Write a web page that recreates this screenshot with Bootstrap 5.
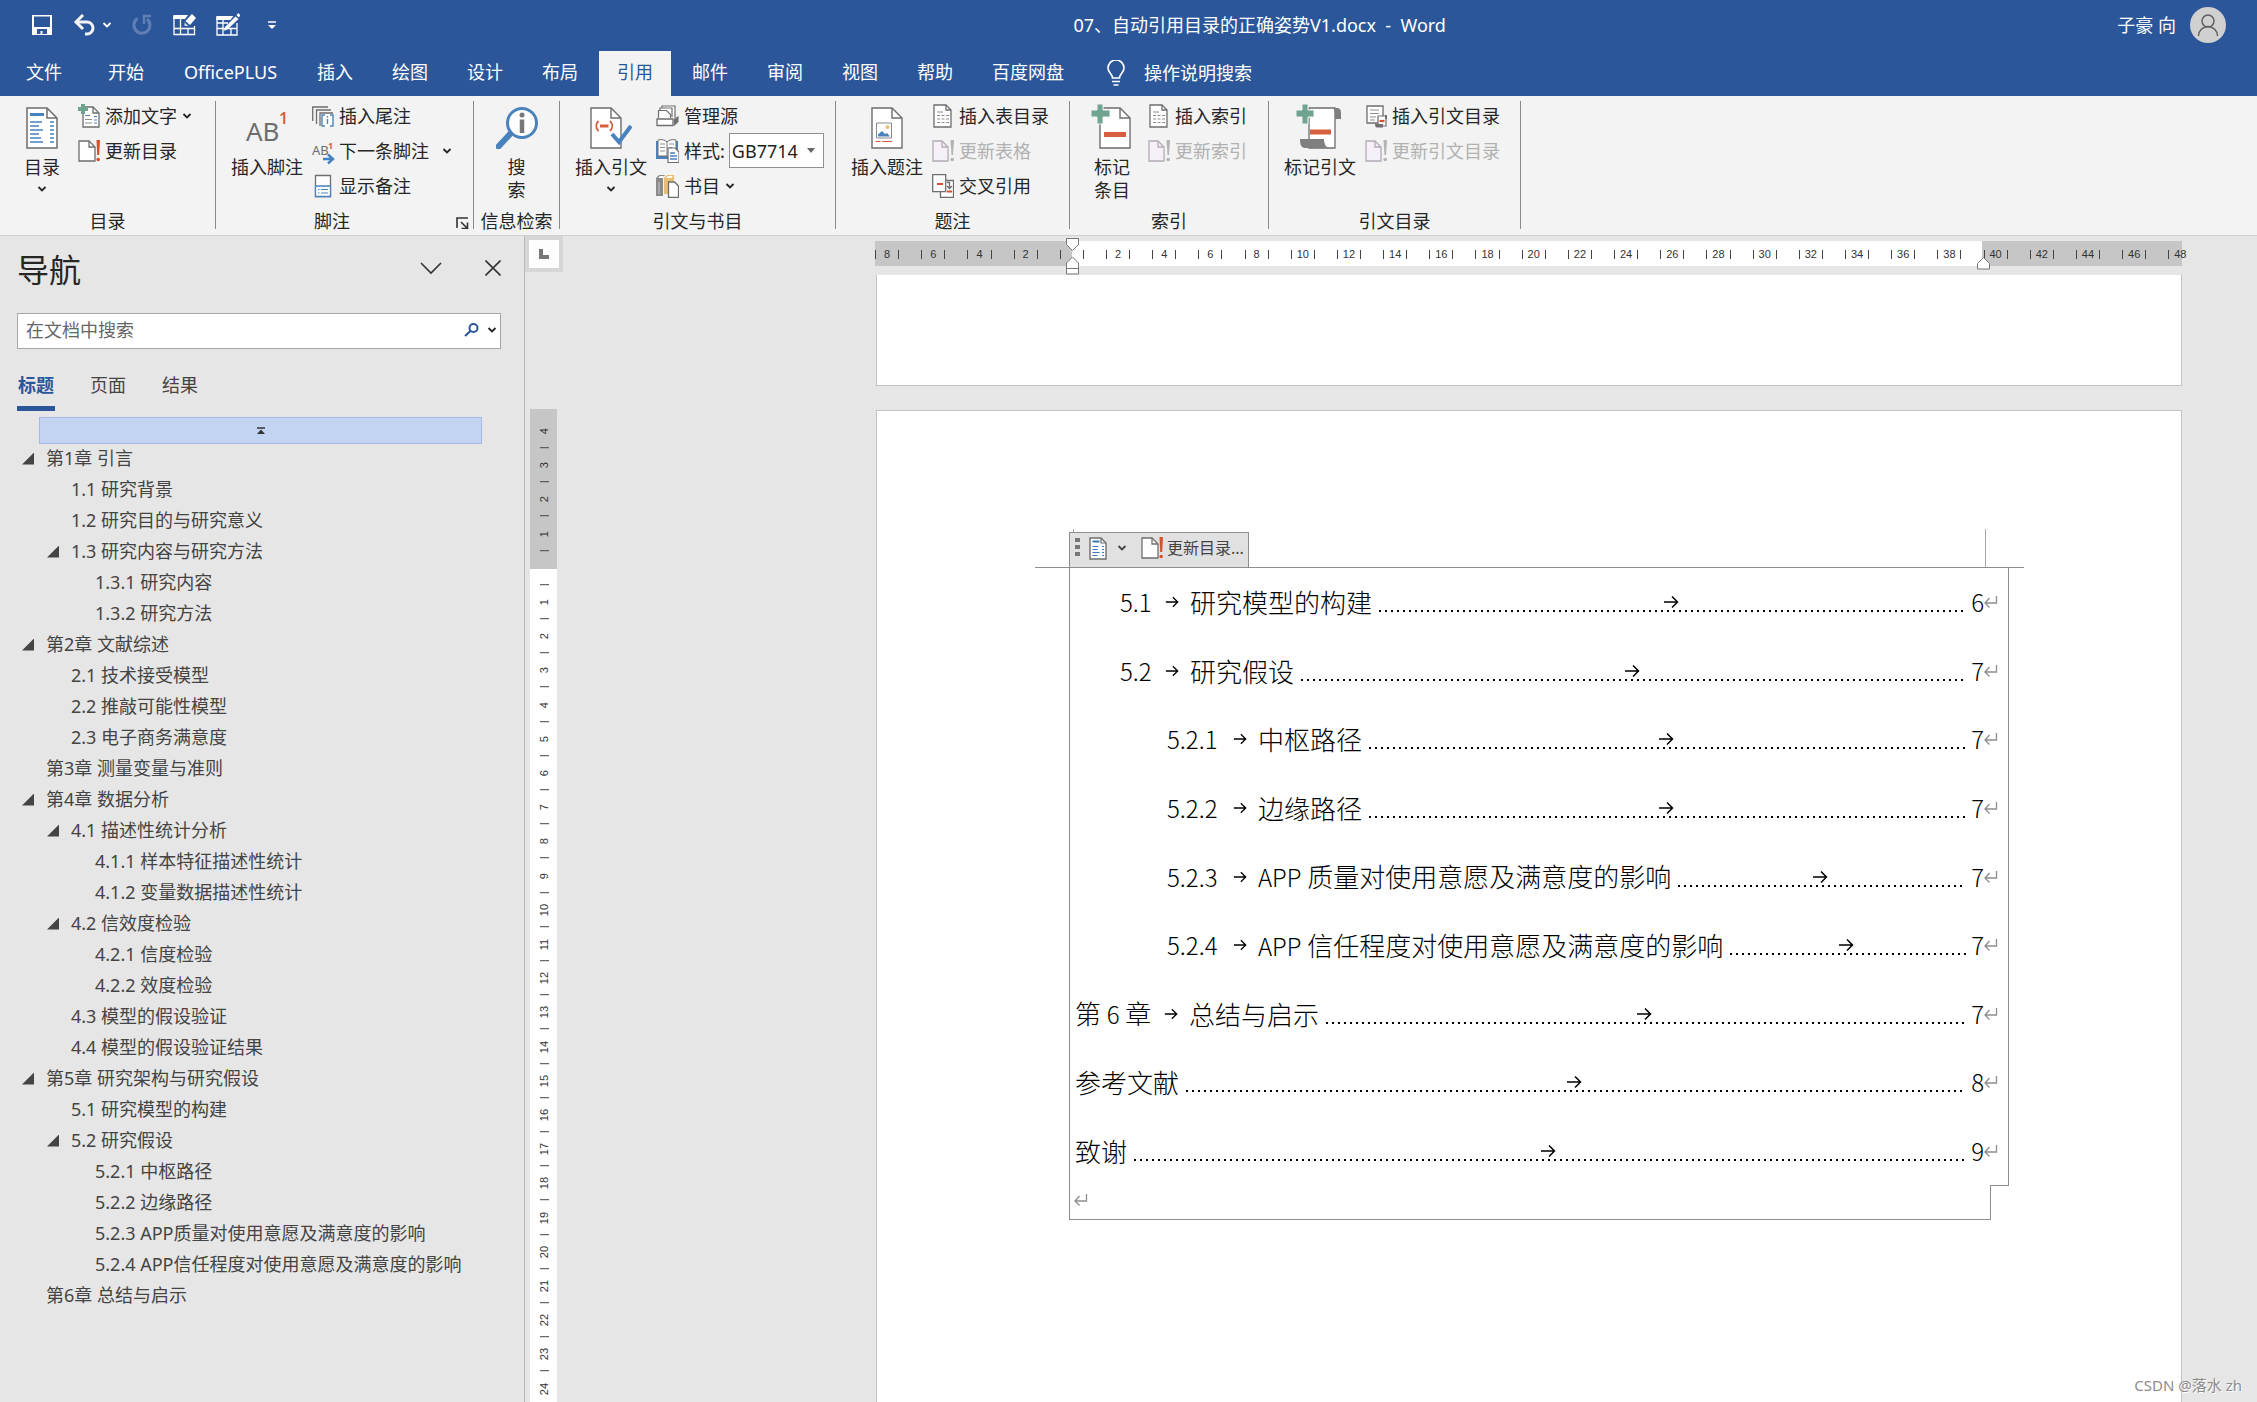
<!DOCTYPE html>
<html lang="zh-CN">
<head>
<meta charset="utf-8">
<meta name="viewport" content="width=device-width, initial-scale=1">
<title>07、自动引用目录的正确姿势V1.docx - Word</title>
<link href="https://cdn.jsdelivr.net/npm/bootstrap@5.3.0/dist/css/bootstrap.min.css" rel="stylesheet">
<style>
:root{--word:#2b579a;--ink:#262626;--soft:#444;--edge:#7a7a7a;--accent:#4a82bd;--warn:#d65f3f;--plus:#6fa491}
body{font:18px/24px "Noto Sans","Noto Sans CJK SC",sans-serif;color:var(--ink);background:#e6e6e6;min-height:100vh;overflow:hidden}
button{font:inherit;color:inherit;background:none;border:0;padding:0;text-align:left}
svg{display:block;flex:none}
.app-head{background:var(--word);color:#fff}
.title-row{height:51px;padding:0 31px 2px 32px}
.quick{gap:20px}
.quick-undo{gap:6px}
.doc-name{padding-left:118px;white-space:pre}
.account{gap:14px}
.tab-strip{height:45px;padding-left:8px;gap:3px}
.tab-strip .nav-link{color:#fff;padding:0 18px;height:45px;line-height:42px;border-radius:0;white-space:nowrap}
.tab-strip .nav-link.active{background:#f3f3f3;color:var(--word)}
.tab-file{margin-right:7px}
.tab-strip .tab-plus{width:131px;text-align:center}
.tell-me{gap:19px;margin-left:22px;padding-bottom:2px}
.ribbon{background:#f3f3f3;border-bottom:1px solid #d0d0d0;padding:5px 0 6px;height:140px}
.rb-group{border-right:1px solid #8a8a8a;height:128px;width:216px}
.rb-body{height:112px;padding-left:6px}
.rb-label{line-height:16px}
.big-btn{width:90px;padding-top:6px;white-space:nowrap}
.big-btn.slim{width:72px}
.big-btn svg:first-child{margin-bottom:7px}
.big-btn span{line-height:23px}
.big-btn span+svg{margin-top:6px}
.small-col{margin-top:-3px}
.small-btn{height:35px;gap:5px;white-space:nowrap}
.small-btn:disabled{color:#b1b1b1}
.g-foot{width:258px}.g-look{width:86px}.g-cite{width:276px}.g-cap{width:234px}.g-index{width:199px}.g-auth{width:252px}
.g-look .rb-label{margin-top:11px}
.style-pick{width:95px;height:35px;border:1px solid #8f8f8f;background:#fff;appearance:none;padding:0 2px;font:inherit;color:#1e1e1e;border-radius:0}
.style-wrap{position:relative;margin-left:-1px}
.style-wrap svg{position:absolute;right:9px;top:15px;pointer-events:none}
.work{height:calc(100vh - 236px)}
.nav-pane{width:525px;border-right:1px solid #b9b9b9;padding:0 23px 0 17px;flex:none}
.pane-head{height:70px;padding-bottom:2px}
.pane-title{font-size:32px;line-height:40px;font-weight:400;margin:0}
.pane-tools{gap:43px;padding-bottom:4px}
.find-box{border:1px solid #a6a6a6;background:#fff;height:36px;margin-top:7px;padding:0 3px 2px 8px}
.find-box input{font:inherit;border:0;outline:0;background:none;padding:0;color:var(--ink);line-height:30px}
.find-box input::placeholder{color:#666;opacity:1}
.pane-tabs{gap:34px;margin-top:13px}
.pane-tabs .nav-link{color:var(--soft);padding:2px 1px 0;line-height:42px;border-bottom:5px solid transparent;border-radius:0}
.pane-tabs .nav-link.active{color:var(--word);font-weight:700;border-color:var(--word)}
.top-jump{height:27px;margin:6px 19px 0 22px;background:#c3d4f2;border:1px solid #a3bce6}
.outline{margin:-1px 0 0;padding:0;list-style:none;color:var(--soft)}
.outline li{height:31px;line-height:31px;padding-left:29px;display:flex;align-items:center;white-space:nowrap}
.outline .lv2{padding-left:54px}
.outline .lv3{padding-left:78px}
.outline li button{width:12px;height:12px;background:var(--soft);clip-path:polygon(100% 0,100% 100%,0 100%);margin:0 12px 0 -24px}
.side-rule{width:38px;flex:none}
.tab-kind{width:38px;height:36px;border:4px solid #d6d6d6;background:#fdfdfd}
.v-rule{width:27px;margin:137px 0 0 5px;padding-top:5px;background:linear-gradient(#c6c6c6 160px,#fff 160px)}
.v-rule .ticks{height:calc(100% + 4px)}
.v-rule i,.h-rule i{font:11px/12px "Liberation Sans",sans-serif;color:#333;flex:1 1 0}
.v-rule i{writing-mode:vertical-rl;transform:rotate(180deg);display:flex;align-items:center;justify-content:center;width:27px;position:relative}
.v-rule i::before{content:"";position:absolute;top:0;left:8px;width:9px;height:1px;background:#444}
.canvas{padding:0 75px 0 313px;min-width:0}
.h-rule{height:25px;margin:5px 0 0 -1px;position:relative;background:linear-gradient(to right,#c6c6c6 197px,#fff 197px,#fff calc(100% - 200px),#c6c6c6 calc(100% - 200px))}
.h-rule .ticks{margin:0 -20px 0 -11px;height:25px;padding-top:2px}
.h-rule i{text-align:center;height:9px;line-height:9px;white-space:nowrap}
.h-rule i.lab{border-left:1px solid #444;border-right:1px solid #444}
.h-rule i.half{flex-grow:.5}
.h-rule i.endmost{border-right:0}
.mk-left{position:absolute;left:191px;top:-3px}
.mk-right{position:absolute;right:192px;top:16px}
.paper{background:#fff;border:1px solid #c3c3c3}
.paper-prev{height:111px;margin-top:9px;border-top:0}
.paper-now{margin-top:24px;border-bottom:0;padding:118px 157px 0 158px}
.crop-row{height:38px;padding:0 38px 0 34px}
.crop-right{border-right:1px solid #a8a8a8}
.toc-bar{height:35px;margin-top:3px;background:#e1e1e1;border:1px solid #8e8e8e;border-bottom:0;width:180px;padding:0 0 4px 5px;position:relative;font-size:16px;color:var(--soft)}
.toc-bar::before{content:"";position:absolute;left:3px;top:-4px;width:1px;height:3px;background:#a8a8a8}
.bar-pick{gap:10px;margin:0 14px 0 8px}
.bar-update{gap:4px}
.toc-rule{height:1px;background:#8e8e8e}
.toc-frame{margin:0 15px 0 34px}
.toc-list{height:618px;border:1px solid #8e8e8e;border-top:0;color:#000;font:26px/40px "Noto Sans CJK SC",sans-serif;font-weight:300}
.toc-list a{color:inherit;text-decoration:none;padding:0 10px 0 5px;white-space:nowrap;flex:1 1 0}
.toc-list .t2{padding-left:50px}
.toc-list .t3{padding-left:97px}
.toc-num{width:89px}
.t2 .toc-num{width:45px}
.t3 .toc-num{width:66px}
.toc-list b{font-size:24px;font-weight:300}
.toc-num+svg{margin-right:11px}
.leader{height:20px;margin:0 5px 0 3px;background:repeating-linear-gradient(to right,transparent 0 4px,#000 4px 6px) bottom/100% 2px no-repeat}
.toc-end{width:calc(100% - 18px);height:35px;margin-top:-1px;background:#fff;border:1px solid #8e8e8e;border-top:0;position:relative;padding:8px 0 0 4px}
.stamp{position:absolute;right:15px;bottom:5px;font-size:15px;color:#8d8d8d;text-shadow:1px 1px 0 #fff}
</style>
</head>
<body class="d-flex flex-column">
<svg width="0" height="0" class="position-absolute" aria-hidden="true">
<defs>
<symbol id="chev" viewBox="0 0 10 8"><path d="M1.500 2L5 5.500 8.500 2" fill="none" stroke="currentColor" stroke-width="1.800"/></symbol>
<symbol id="docbang" viewBox="0 0 22 24"><path d="M1 2h10l6 6v14H1z" fill="#fff" stroke="#6e6e6e" stroke-width="1.300"/><path d="M11 2v6h6" fill="none" stroke="#6e6e6e" stroke-width="1.300"/><path d="M18.500 1h3.500l-.8 15h-2z" fill="#d6502f"/><circle cx="20.200" cy="20.500" r="1.800" fill="#d6502f"/></symbol>
<symbol id="docbang-off" viewBox="0 0 22 24"><path d="M1 2h9l6 6v14H1z" fill="#f6f0f8" stroke="#b3aab5" stroke-width="1.300"/><path d="M10 2v6h6" fill="none" stroke="#b3aab5" stroke-width="1.300"/><path d="M18.500 1h3.500l-1 15h-1.500z" fill="#b3b3b3"/><circle cx="20.200" cy="20.500" r="1.800" fill="#b3b3b3"/></symbol>
<symbol id="doctable" viewBox="0 0 22 24"><path d="M2 1h12l5 5v17H2z" fill="#fff" stroke="#6e6e6e" stroke-width="1.300"/><path d="M14 1v5h5" fill="none" stroke="#6e6e6e" stroke-width="1.300"/><path d="M5 8h6M5 11.500h3M9.500 11.500h3M14 11.500h3M5 15h3M9.500 15h3M14 15h3M5 18.500h3M9.500 18.500h3M14 18.500h3" stroke="#8d8d8d" stroke-width="1.200"/></symbol>
<symbol id="bluedoc" viewBox="0 0 32 42"><path d="M1 1h20l10 10v30H1z" fill="#fff" stroke="#6e6e6e" stroke-width="1.500"/><path d="M21 1v10h10" fill="none" stroke="#6e6e6e" stroke-width="1.500"/><path d="M4 7.500h14" stroke="#4a82bd" stroke-width="3"/><path d="M4 15h12M4 19h9M4 23h13M4 27h9M4 31h11M4 35h13M24 15h4M24 19h4M24 23h4M24 27h4M24 31h4M24 35h4" stroke="#4a82bd" stroke-width="1.400"/></symbol>
<symbol id="bluedoc-s" viewBox="0 0 18 23"><path d="M1 1h11l5 5v16H1z" fill="#fff" stroke="#6e6e6e" stroke-width="1.400"/><path d="M12 1v5h5" fill="none" stroke="#6e6e6e" stroke-width="1.200"/><path d="M3.500 4.500h7" stroke="#3c78b8" stroke-width="2"/><path d="M3.500 9.500h6M3.500 12.500h5M3.500 15.500h7M3.500 18.500h5M13 9.500h2M13 12.500h2M13 15.500h2M13 18.500h2" stroke="#3c78b8" stroke-width="1.200"/></symbol>
<symbol id="tabarrow" viewBox="0 0 16 14"><path d="M1 7h14M9 1.500L14.500 7 9 12.500" fill="none" stroke="#000" stroke-width="1.500"/></symbol>
<symbol id="ret" viewBox="0 0 14 14"><path d="M12.500 1v7H1M5.500 3L1 8l4.500 4.500" fill="none" stroke="#8d8d8d" stroke-width="1.300"/></symbol>
</defs>
</svg>

<header class="app-head">
  <div class="title-row d-flex align-items-center">
    <div class="quick d-flex align-items-center">
      <button aria-label="保存"><svg width="20" height="20" viewBox="0 0 20 20"><path fill="#fff" fill-rule="evenodd" d="M0 0h20v20H0zM2 1.500V12h16V1.500zM5 14v5h3.500v-3h2v3H15v-5z"/></svg></button>
      <div class="quick-undo d-flex align-items-center">
        <button aria-label="撤消"><svg width="24" height="22" viewBox="0 0 24 22"><path d="M5 8h10a6 6 0 0 1 0 12h-2" fill="none" stroke="#f3f3f3" stroke-width="3"/><path d="M11 1L4 8l7 7" fill="none" stroke="#f3f3f3" stroke-width="3"/></svg></button>
        <button aria-label="撤消列表"><svg width="10" height="8"><use href="#chev"/></svg></button>
      </div>
      <button aria-label="重复"><svg width="20" height="22" viewBox="0 0 20 22"><path d="M5.500 4.500A8 8 0 1 0 15 5" fill="none" stroke="#6080b5" stroke-width="3"/><path d="M19 2h-7v8" fill="none" stroke="#6080b5" stroke-width="2.400"/></svg></button>
      <button aria-label="擦除表格"><svg width="24" height="22" viewBox="0 0 24 22"><path d="M2 2v18.500h20.500V12M2 14.500h20.500M8.500 4v16.500M16 14v6.500" fill="none" stroke="#fff" stroke-width="1.300"/><path d="M1.400 1H16l-3 4H1.400z" fill="#fff"/><path d="M20 0l4 4-6 7-4.500-4z" fill="#fff"/><path d="M12.500 8.500l4 3.500h-4z" fill="#cfd9ea"/></svg></button>
      <button aria-label="绘制表格"><svg width="24" height="24" viewBox="0 0 24 24"><path d="M1 4v18h20V10M1 10h11M1 15.500h20M7 5v17M15 16v6" fill="none" stroke="#fff" stroke-width="1.300"/><path d="M.4 3h17l-3 4H.4z" fill="#fff"/><path d="M19.500 3.500l3 2.500L12 16l-4 2 1.500-4.500z" fill="#fff"/><path d="M20.500 2l2-2 2 2.500-2 2z" fill="#fff"/></svg></button>
      <button aria-label="自定义快速访问工具栏"><svg width="24" height="8" viewBox="0 0 24 8"><path d="M8 1h8" stroke="#fff" stroke-width="1.500"/><path d="M8 4h8l-4 4z" fill="#fff"/></svg></button>
    </div>
    <div class="doc-name flex-fill text-center">07、自动引用目录的正确姿势V1.docx  -  Word</div>
    <button class="account d-flex align-items-center">子豪 向
      <svg width="36" height="36" viewBox="0 0 36 36"><circle cx="18" cy="18" r="18" fill="#d0d0d0"/><circle cx="18" cy="14" r="6" fill="none" stroke="#5e5e5e" stroke-width="1.500"/><path d="M8.500 29a9.500 9.500 0 0 1 19 0" fill="none" stroke="#5e5e5e" stroke-width="1.500"/></svg>
    </button>
  </div>
  <nav class="tab-strip nav flex-nowrap">
    <a class="nav-link tab-file" href="#">文件</a>
    <a class="nav-link" href="#">开始</a>
    <a class="nav-link tab-plus" href="#">OfficePLUS</a>
    <a class="nav-link" href="#">插入</a>
    <a class="nav-link" href="#">绘图</a>
    <a class="nav-link" href="#">设计</a>
    <a class="nav-link" href="#">布局</a>
    <a class="nav-link active" href="#" aria-current="page">引用</a>
    <a class="nav-link" href="#">邮件</a>
    <a class="nav-link" href="#">审阅</a>
    <a class="nav-link" href="#">视图</a>
    <a class="nav-link" href="#">帮助</a>
    <a class="nav-link" href="#">百度网盘</a>
    <button class="tell-me d-flex align-items-center"><svg width="18" height="26" viewBox="0 0 18 26"><path d="M5.500 18c0-4-4.500-5-4.500-10a8 8 0 0 1 16 0c0 5-4.500 6-4.500 10z" fill="none" stroke="#fff" stroke-width="1.600"/><path d="M5 21.500h8M6.500 25h5" stroke="#fff" stroke-width="1.600"/></svg>操作说明搜索</button>
  </nav>
</header>

<section class="ribbon d-flex" aria-label="引用">
  <div class="rb-group">
    <div class="rb-body d-flex">
      <button class="big-btn slim d-flex flex-column align-items-center"><svg width="32" height="42"><use href="#bluedoc"/></svg><span>目录</span><svg width="10" height="8"><use href="#chev"/></svg></button>
      <div class="small-col">
        <button class="small-btn d-flex align-items-center"><svg width="22" height="24" viewBox="0 0 22 24"><path d="M5 3h10l6 6v14H5z" fill="#fff" stroke="#6e6e6e" stroke-width="1.300"/><path d="M15 3v6h6" fill="none" stroke="#6e6e6e" stroke-width="1.300"/><path d="M7 15.500h7M7 19h7" stroke="#8d8d8d" stroke-width="1.200"/><path d="M7 11.500h5M16 12.500h3M16 16h3M16 19h3" stroke="#4a82bd" stroke-width="1.200"/><path d="M3 0h4v3h3v4H7v3H3V7H0V3h3z" fill="#6fa491"/></svg>添加文字<svg width="10" height="8"><use href="#chev"/></svg></button>
        <button class="small-btn d-flex align-items-center"><svg width="22" height="24"><use href="#docbang"/></svg>更新目录</button>
      </div>
    </div>
    <div class="rb-label text-center">目录</div>
  </div>

  <div class="rb-group g-foot">
    <div class="rb-body d-flex">
      <button class="big-btn d-flex flex-column align-items-center"><svg width="44" height="42" viewBox="0 0 44 42"><text x="1" y="34" font-size="26" fill="#6e6e6e">AB</text><text x="34" y="17" font-size="16" font-weight="600" fill="#d65f3f">1</text></svg><span>插入脚注</span></button>
      <div class="small-col">
        <button class="small-btn d-flex align-items-center"><svg width="22" height="24" viewBox="0 0 22 24"><path d="M.7 17V3H16M4.500 20V6H19M8 22V9h13" fill="none" stroke="#6e6e6e" stroke-width="1.300"/><path d="M9 10h13v13H9z" fill="#fff"/><path d="M13 11h-3v11h3M18 11h3v11h-3M15.500 15v5M15.500 12v1.500" fill="none" stroke="#4a82bd" stroke-width="1.400"/></svg>插入尾注</button>
        <button class="small-btn d-flex align-items-center"><svg class="overflow-visible" width="22" height="28" viewBox="0 0 22 28"><text x="0" y="18" font-size="13" fill="#6e6e6e">AB</text><text x="16" y="12" font-size="9" font-weight="700" fill="#d65f3f">1</text><path d="M11 22h9M16 17.500l5 4.500-5 4.500" fill="none" stroke="#4a82bd" stroke-width="2.400"/></svg>下一条脚注<svg class="ms-2" width="10" height="8"><use href="#chev"/></svg></button>
        <button class="small-btn d-flex align-items-center"><svg width="22" height="24" viewBox="0 0 22 24"><path d="M3.500 1.500h15v21h-15z" fill="#fff" stroke="#6e6e6e" stroke-width="1.300"/><path d="M3.500 12h15v10.500h-15z" fill="#fff" stroke="#4a82bd" stroke-width="1.300"/><path d="M6 15.500h1.500M9 15.500h7M6 19h1.500M9 19h7" stroke="#4a82bd" stroke-width="1.200"/></svg>显示备注</button>
      </div>
    </div>
    <div class="rb-label d-flex"><span class="flex-fill text-center pe-2">脚注</span><button aria-label="脚注和尾注"><svg class="mt-1 me-1" width="13" height="12" viewBox="0 0 13 12"><path d="M1 11V1h11M5 5l6 6M11.500 5.500v6h-6" fill="none" stroke="#333" stroke-width="1.600"/></svg></button></div>
  </div>

  <div class="rb-group g-look">
    <button class="big-btn slim mx-auto d-flex flex-column align-items-center h-auto"><svg width="42" height="42" viewBox="0 0 42 42"><path d="M2.500 39.500L15 26" stroke="#4a82bd" stroke-width="6" stroke-linecap="round"/><circle cx="26" cy="16" r="14.500" fill="#fff" stroke="#4a82bd" stroke-width="3"/><circle cx="26" cy="8" r="2.500" fill="#777"/><path d="M26 12.500V26" stroke="#777" stroke-width="4.500"/></svg><span>搜</span><span>索</span></button>
    <div class="rb-label text-center">信息检索</div>
  </div>

  <div class="rb-group g-cite">
    <div class="rb-body d-flex">
      <button class="big-btn d-flex flex-column align-items-center"><svg width="42" height="42" viewBox="0 0 42 42"><path d="M1 1h20l10 10v30H1z" fill="#fff" stroke="#6e6e6e" stroke-width="1.400"/><path d="M21 1v10h10" fill="none" stroke="#6e6e6e" stroke-width="1.400"/><path d="M8.500 14c-3 3-3 7 0 10M20 14c3 3 3 7 0 10" fill="none" stroke="#d65f3f" stroke-width="1.800"/><path d="M10 19h8.500" stroke="#d65f3f" stroke-width="3"/><path d="M22 27l7 8 12-16" fill="none" stroke="#4a82bd" stroke-width="4"/></svg><span>插入引文</span><svg width="10" height="8"><use href="#chev"/></svg></button>
      <div class="small-col">
        <button class="small-btn d-flex align-items-center"><svg width="23" height="22" viewBox="0 0 23 22"><path d="M6 3V1h13v12M4 5V3h12v9" fill="#fff" stroke="#6e6e6e" stroke-width="1.200"/><path d="M2.500 13V5.500h8l4 4V13" fill="#fff" stroke="#6e6e6e" stroke-width="1.200"/><path d="M1 14h16v6.500H1z" fill="#fff" stroke="#6e6e6e" stroke-width="1.300"/><path d="M18 14l4.500-3v6L18 21z" fill="#6e6e6e"/></svg>管理源</button>
        <div class="small-btn d-flex align-items-center"><svg width="23" height="24" viewBox="0 0 23 24"><path d="M0 2h22v18H0z" fill="#4a82bd"/><path d="M2 1c4-1 7 0 9 2 2-2 5-3 9-2v16H2z" fill="#fff" stroke="#6e6e6e"/><path d="M11 3v14M4 5h5M4 8.500h5M4 12h5M13 5h5M13 8.500h3" stroke="#8d8d8d" stroke-width="1.200"/><path d="M12 9h7l4 4v10.500H12z" fill="#fff" stroke="#6e6e6e" stroke-width="1.200"/><path d="M14 14h5M14 17h7M14 20h7" stroke="#4a82bd" stroke-width="1.300"/></svg><label for="citeStyle">样式:</label>
          <div class="style-wrap"><select id="citeStyle" class="style-pick"><option>GB7714</option></select><svg width="8" height="5" viewBox="0 0 8 5"><path d="M0 0h8L4 5z" fill="#666"/></svg></div></div>
        <button class="small-btn d-flex align-items-center"><svg width="23" height="24" viewBox="0 0 23 24"><path d="M0 4l3-3h6L7 4v18H0z" fill="#8a8a8a"/><path d="M2 4l2-2h4L7 4z" fill="#fff"/><path d="M8 4l3-3h7v5l-3 14H8z" fill="#e9bd74"/><path d="M10 4l2-2h5l-2 2z" fill="#fff"/><path d="M3 8v12" stroke="#c8c8c8"/><path d="M12.500 8h6l4 4v11.300h-10z" fill="#fff" stroke="#6e6e6e" stroke-width="1.300"/></svg>书目<svg width="10" height="8"><use href="#chev"/></svg></button>
      </div>
    </div>
    <div class="rb-label text-center">引文与书目</div>
  </div>

  <div class="rb-group g-cap">
    <div class="rb-body d-flex">
      <button class="big-btn d-flex flex-column align-items-center"><svg width="32" height="42" viewBox="0 0 32 42"><path d="M1 1h20l10 10v30H1z" fill="#fff" stroke="#6e6e6e" stroke-width="1.400"/><path d="M21 1v10h10" fill="none" stroke="#6e6e6e" stroke-width="1.400"/><path d="M5.500 16h15v15h-15z" fill="#fff" stroke="#8a8a8a"/><circle cx="16.500" cy="20" r="2" fill="#ecc078"/><path d="M7 29.500v-2l4-3.500 3 3 2-1 3 3.500z" fill="#4a82bd"/><path d="M4.500 34.500h5M11 34.500h10" stroke="#d65f3f" stroke-width="1.200"/></svg><span>插入题注</span></button>
      <div class="small-col">
        <button class="small-btn d-flex align-items-center"><svg width="22" height="24"><use href="#doctable"/></svg>插入表目录</button>
        <button class="small-btn d-flex align-items-center" disabled><svg width="22" height="24"><use href="#docbang-off"/></svg>更新表格</button>
        <button class="small-btn d-flex align-items-center"><svg width="22" height="24" viewBox="0 0 22 24"><path d="M8.500 6.500h13v17h-13z" fill="#fff" stroke="#6e6e6e" stroke-width="1.300"/><path d="M.7.700h13v17H.7z" fill="#fff" stroke="#6e6e6e" stroke-width="1.300"/><path d="M5 10h6M15 17.500h5" stroke="#d6502f" stroke-width="2.200"/><path d="M15 8.500h2.500V14M15 12l2.500 2.500L20 12" fill="none" stroke="#6e6e6e" stroke-width="1.300"/></svg>交叉引用</button>
      </div>
    </div>
    <div class="rb-label text-center">题注</div>
  </div>

  <div class="rb-group g-index">
    <div class="rb-body d-flex">
      <button class="big-btn slim d-flex flex-column align-items-center"><svg class="overflow-visible" width="42" height="42" viewBox="0 0 42 42"><path d="M9 1h20l10 10v30H9z" fill="#fff" stroke="#6e6e6e" stroke-width="1.400"/><path d="M29 1v10h10" fill="none" stroke="#6e6e6e" stroke-width="1.400"/><path d="M6-3h6v6h7v7h-7v7H6v-7H0V3h6z" fill="#6fa491" stroke="#f3f3f3"/><path d="M13 27.500h22" stroke="#d65f3f" stroke-width="5"/></svg><span>标记</span><span>条目</span></button>
      <div class="small-col">
        <button class="small-btn d-flex align-items-center"><svg width="22" height="24"><use href="#doctable"/></svg>插入索引</button>
        <button class="small-btn d-flex align-items-center" disabled><svg width="22" height="24"><use href="#docbang-off"/></svg>更新索引</button>
      </div>
    </div>
    <div class="rb-label text-center">索引</div>
  </div>

  <div class="rb-group g-auth">
    <div class="rb-body d-flex">
      <button class="big-btn d-flex flex-column align-items-center"><svg class="overflow-visible" width="48" height="42" viewBox="1 0 48 42"><path d="M14 1h26v40H14z" fill="#fff" stroke="#6e6e6e" stroke-width="1.300"/><path d="M36 1h6c3 0 4 2 4 5v6h-6V6c0-3-1-5-4-5z" fill="#7f7f7f"/><path d="M5 32h24c0 5 2 9 6 9H10c-4 0-5-4-5-9z" fill="#7f7f7f"/><path d="M7-3h6v6h6v7h-6v7H7v-7H1V3h6z" fill="#6fa491" stroke="#f3f3f3"/><path d="M15 25h21" stroke="#d65f3f" stroke-width="5"/></svg><span>标记引文</span></button>
      <div class="small-col">
        <button class="small-btn d-flex align-items-center"><svg width="22" height="24" viewBox="0 0 22 24"><path d="M2 2h16v17H2z" fill="#fff" stroke="#6e6e6e" stroke-width="1.300"/><path d="M5 6h9M5 9.500h9M5 13h6M5 16h5" stroke="#8d8d8d" stroke-width="1.200"/><path d="M13 12h8v10h-8z" fill="#fff" stroke="#6e6e6e" stroke-width="1.200"/><path d="M10 20h8v3.500h-6c-1.500 0-2-1.500-2-3.500zM20 11h1.500c1 0 1 2 1 4H20z" fill="#6e6e6e"/><path d="M14.500 17h5" stroke="#d6502f" stroke-width="2.200"/></svg>插入引文目录</button>
        <button class="small-btn d-flex align-items-center" disabled><svg width="22" height="24"><use href="#docbang-off"/></svg>更新引文目录</button>
      </div>
    </div>
    <div class="rb-label text-center">引文目录</div>
  </div>
</section>

<div class="work d-flex">
  <aside class="nav-pane">
    <div class="pane-head d-flex align-items-center justify-content-between">
      <h1 class="pane-title">导航</h1>
      <div class="pane-tools d-flex align-items-center">
        <button aria-label="任务窗格选项"><svg width="22" height="14" viewBox="0 0 22 14"><path d="M1 2l10 10L21 2" fill="none" stroke="#333" stroke-width="1.600"/></svg></button>
        <button aria-label="关闭"><svg width="16" height="16" viewBox="0 0 16 16"><path d="M.5.500l15 15M15.500.500l-15 15" stroke="#333" stroke-width="1.600"/></svg></button>
      </div>
    </div>
    <div class="find-box d-flex align-items-center">
      <input class="flex-fill" type="search" placeholder="在文档中搜索" aria-label="在文档中搜索">
      <button aria-label="搜索"><svg width="15" height="14" viewBox="0 0 15 14"><circle cx="9.500" cy="5" r="4" fill="none" stroke="#2b579a" stroke-width="2"/><path d="M6.500 8L1 13" stroke="#2b579a" stroke-width="2.200"/></svg></button>
      <button class="ms-2" aria-label="搜索选项"><svg width="10" height="8"><use href="#chev"/></svg></button>
    </div>
    <nav class="pane-tabs nav">
      <a class="nav-link active" href="#">标题</a>
      <a class="nav-link" href="#">页面</a>
      <a class="nav-link" href="#">结果</a>
    </nav>
    <div class="top-jump d-flex align-items-center justify-content-center"><svg width="8" height="8" viewBox="0 0 8 8"><path d="M0 1h8" stroke="#333" stroke-width="1.500"/><path d="M4 2.500L8 7H0z" fill="#333"/></svg></div>
    <ul class="outline">
      <li><button aria-label="折叠"></button>第1章 引言</li>
      <li class="lv2">1.1 研究背景</li>
      <li class="lv2">1.2 研究目的与研究意义</li>
      <li class="lv2"><button aria-label="折叠"></button>1.3 研究内容与研究方法</li>
      <li class="lv3">1.3.1 研究内容</li>
      <li class="lv3">1.3.2 研究方法</li>
      <li><button aria-label="折叠"></button>第2章 文献综述</li>
      <li class="lv2">2.1 技术接受模型</li>
      <li class="lv2">2.2 推敲可能性模型</li>
      <li class="lv2">2.3 电子商务满意度</li>
      <li>第3章 测量变量与准则</li>
      <li><button aria-label="折叠"></button>第4章 数据分析</li>
      <li class="lv2"><button aria-label="折叠"></button>4.1 描述性统计分析</li>
      <li class="lv3">4.1.1 样本特征描述性统计</li>
      <li class="lv3">4.1.2 变量数据描述性统计</li>
      <li class="lv2"><button aria-label="折叠"></button>4.2 信效度检验</li>
      <li class="lv3">4.2.1 信度检验</li>
      <li class="lv3">4.2.2 效度检验</li>
      <li class="lv2">4.3 模型的假设验证</li>
      <li class="lv2">4.4 模型的假设验证结果</li>
      <li><button aria-label="折叠"></button>第5章 研究架构与研究假设</li>
      <li class="lv2">5.1 研究模型的构建</li>
      <li class="lv2"><button aria-label="折叠"></button>5.2 研究假设</li>
      <li class="lv3">5.2.1 中枢路径</li>
      <li class="lv3">5.2.2 边缘路径</li>
      <li class="lv3">5.2.3 APP质量对使用意愿及满意度的影响</li>
      <li class="lv3">5.2.4 APP信任程度对使用意愿及满意度的影响</li>
      <li>第6章 总结与启示</li>
    </ul>
  </aside>

  <div class="side-rule d-flex flex-column">
    <button class="tab-kind d-flex align-items-center justify-content-center" aria-label="制表符"><svg width="10" height="10" viewBox="0 0 10 10"><path d="M2 0v8h8" fill="none" stroke="#777" stroke-width="4"/></svg></button>
    <div class="v-rule flex-fill"><div class="ticks d-flex flex-column" id="vTicks"></div></div>
  </div>

  <main class="canvas flex-fill d-flex flex-column">
    <div class="h-rule">
      <div class="ticks d-flex align-items-center" id="hTicks"></div>
      <svg class="mk-left" width="13" height="37" viewBox="0 0 13 37"><path d="M.5.500h12v6l-6 6-6-6zM.5 36V25l6-6 6 6v11zM.500 30.500h12" fill="#fff" stroke="#777"/></svg>
      <svg class="mk-right" width="13" height="13" viewBox="0 0 13 13"><path d="M.5 12V6.500l6-6 6 6V12z" fill="#fff" stroke="#777"/></svg>
    </div>
    <div class="paper paper-prev"></div>
    <article class="paper paper-now flex-fill">
      <div class="crop-row d-flex justify-content-between">
        <div class="toc-bar d-flex align-items-center">
          <svg width="6" height="20" viewBox="0 0 6 20"><path d="M0 0h5v4H0zM0 7h5v4H0zM0 14h5v4H0z" fill="#777"/></svg>
          <button class="bar-pick d-flex align-items-center" aria-label="目录"><svg width="18" height="23"><use href="#bluedoc-s"/></svg><svg width="10" height="8"><use href="#chev"/></svg></button>
          <button class="bar-update d-flex align-items-center"><svg width="22" height="24"><use href="#docbang"/></svg>更新目录...</button>
        </div>
        <div class="crop-right"></div>
      </div>
      <div class="toc-rule"></div>
      <div class="toc-frame">
        <div class="toc-list d-flex flex-column">
          <a href="#" class="t2 d-flex align-items-center"><b class="toc-num">5.1</b><svg width="14" height="14"><use href="#tabarrow"/></svg>研究模型的构建<span class="leader flex-fill d-flex align-items-center justify-content-center"><svg width="16" height="14"><use href="#tabarrow"/></svg></span><b>6</b><svg width="14" height="14"><use href="#ret"/></svg></a>
          <a href="#" class="t2 d-flex align-items-center"><b class="toc-num">5.2</b><svg width="14" height="14"><use href="#tabarrow"/></svg>研究假设<span class="leader flex-fill d-flex align-items-center justify-content-center"><svg width="16" height="14"><use href="#tabarrow"/></svg></span><b>7</b><svg width="14" height="14"><use href="#ret"/></svg></a>
          <a href="#" class="t3 d-flex align-items-center"><b class="toc-num">5.2.1</b><svg width="14" height="14"><use href="#tabarrow"/></svg>中枢路径<span class="leader flex-fill d-flex align-items-center justify-content-center"><svg width="16" height="14"><use href="#tabarrow"/></svg></span><b>7</b><svg width="14" height="14"><use href="#ret"/></svg></a>
          <a href="#" class="t3 d-flex align-items-center"><b class="toc-num">5.2.2</b><svg width="14" height="14"><use href="#tabarrow"/></svg>边缘路径<span class="leader flex-fill d-flex align-items-center justify-content-center"><svg width="16" height="14"><use href="#tabarrow"/></svg></span><b>7</b><svg width="14" height="14"><use href="#ret"/></svg></a>
          <a href="#" class="t3 d-flex align-items-center"><b class="toc-num">5.2.3</b><svg width="14" height="14"><use href="#tabarrow"/></svg><span><b>APP</b> 质量对使用意愿及满意度的影响</span><span class="leader flex-fill d-flex align-items-center justify-content-center"><svg width="16" height="14"><use href="#tabarrow"/></svg></span><b>7</b><svg width="14" height="14"><use href="#ret"/></svg></a>
          <a href="#" class="t3 d-flex align-items-center"><b class="toc-num">5.2.4</b><svg width="14" height="14"><use href="#tabarrow"/></svg><span><b>APP</b> 信任程度对使用意愿及满意度的影响</span><span class="leader flex-fill d-flex align-items-center justify-content-center"><svg width="16" height="14"><use href="#tabarrow"/></svg></span><b>7</b><svg width="14" height="14"><use href="#ret"/></svg></a>
          <a href="#" class="d-flex align-items-center"><span class="toc-num">第 <b>6</b> 章</span><svg width="14" height="14"><use href="#tabarrow"/></svg>总结与启示<span class="leader flex-fill d-flex align-items-center justify-content-center"><svg width="16" height="14"><use href="#tabarrow"/></svg></span><b>7</b><svg width="14" height="14"><use href="#ret"/></svg></a>
          <a href="#" class="d-flex align-items-center">参考文献<span class="leader flex-fill d-flex align-items-center justify-content-center"><svg width="16" height="14"><use href="#tabarrow"/></svg></span><b>8</b><svg width="14" height="14"><use href="#ret"/></svg></a>
          <a href="#" class="d-flex align-items-center">致谢<span class="leader flex-fill d-flex align-items-center justify-content-center"><svg width="16" height="14"><use href="#tabarrow"/></svg></span><b>9</b><svg width="14" height="14"><use href="#ret"/></svg></a>
        </div>
        <div class="toc-end"><svg width="14" height="14"><use href="#ret"/></svg></div>
      </div>
    </article>
  </main>
</div>
<div class="stamp">CSDN @落水 zh</div>

<script src="https://cdn.jsdelivr.net/npm/bootstrap@5.3.0/dist/js/bootstrap.bundle.min.js"></script>
<script>
// horizontal ruler: a labelled cell for each even number, a blank cell between two of them
const h = document.getElementById('hTicks');
let out = '<i class="half"></i>';
for (let n = -8; n <= 48; n += 2) {
  out += '<i class="lab' + (n === 48 ? ' endmost' : '') + '">' + (n ? Math.abs(n) : '') + '</i>';
  out += n < 48 ? '<i></i>' : '<i class="half"></i>';
}
h.innerHTML = out;
// vertical ruler: one cell per line, each closed by a tick
let col = '';
for (let n = -4; n <= 24; n++) col += '<i>' + (n ? Math.abs(n) : '') + '</i>';
document.getElementById('vTicks').innerHTML = col;
</script>
</body>
</html>
